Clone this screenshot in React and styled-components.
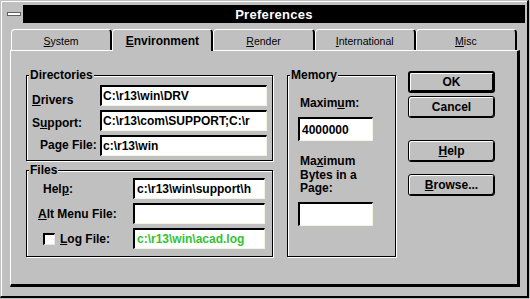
import React from 'react';
import styled, { createGlobalStyle } from 'styled-components';

const GlobalStyle = createGlobalStyle`
  html, body {
    margin: 0;
    background: #c0c0c0;
  }
  body {
    font-family: "Liberation Sans", Arial, sans-serif;
    font-size: 12px;
    font-weight: bold;
    color: #000;
  }
`;

// Dialog frame
const Window = styled.div`
  box-sizing: border-box;
  width: 529px;
  height: 298px;
  background: #c0c0c0;
  border-top: 1px solid #c0c0c0;
  border-left: 1px solid #c0c0c0;
  border-right: 2px solid #000;
  border-bottom: 2px solid #000;
  box-shadow: inset 1px 1px 0 #fff;
  padding: 4px 2px 0 4px;
`;

const TitleRow = styled.div`
  display: flex;
  height: 18px;
`;

const SysMenu = styled.div`
  width: 18px;
  display: flex;
  align-items: center;
  justify-content: center;
  background: #c0c0c0;
`;

const SysDash = styled.div`
  width: 12px;
  height: 2px;
  background: #fff;
  border: 1px solid #606060;
`;

const TitleBar = styled.div`
  flex: 1;
  background: #000;
  color: #fff;
  font-size: 13px;
  letter-spacing: 0.3px;
  display: flex;
  align-items: center;
  justify-content: center;
`;

// Tabs
const Tabs = styled.div`
  margin: 6px 5px 0 5px;
`;

const TabStrip = styled.div`
  display: flex;
  height: 21px;
  padding: 0 3px 0 1px;
`;

const Tab = styled.div`
  flex: 1;
  box-sizing: border-box;
  height: ${({ $active }) => ($active ? 22 : 21)}px;
  margin-bottom: ${({ $active }) => ($active ? -1 : 0)}px;
  border-top: 1px solid #fff;
  border-left: 1px solid #fff;
  border-right: 2px solid #000;
  border-radius: 4px 4px 0 0;
  background: #c0c0c0;
  display: flex;
  align-items: flex-start;
  justify-content: center;
  padding-top: ${({ $active }) => ($active ? 4 : 5)}px;
  font-size: ${({ $active }) => ($active ? 12 : 10.5)}px;
  font-weight: ${({ $active }) => ($active ? 'bold' : 'normal')};
  position: relative;
  z-index: ${({ $active }) => ($active ? 2 : 1)};
`;

const Panel = styled.div`
  box-sizing: border-box;
  height: 237px;
  border-top: 1px solid #fff;
  border-left: 1px solid #fff;
  border-right: 3px solid #000;
  border-bottom: 3px solid #000;
  padding: 17px 0 0 15px;
`;

const Columns = styled.div`
  display: flex;
  align-items: flex-start;
`;

const LeftCol = styled.div`
  width: 247px;
  display: flex;
  flex-direction: column;
`;

// Group boxes
const Group = styled.div`
  box-sizing: border-box;
  width: ${({ $w }) => $w}px;
  height: ${({ $h }) => $h}px;
  margin-top: ${({ $mt }) => $mt}px;
  margin-left: ${({ $ml = 0 }) => $ml}px;
  border: 1px solid #000;
  box-shadow: 1px 1px 0 #fff, inset 1px 1px 0 #fff;
`;

const Legend = styled.div`
  width: fit-content;
  height: 14px;
  line-height: 14px;
  margin: -8px 0 0 2px;
  padding: 0 1px;
  background: #c0c0c0;
`;

const Fields = styled.div`
  display: grid;
  grid-template-columns: ${({ $cols }) => $cols};
  grid-auto-rows: 21px;
  row-gap: 4px;
  margin-top: ${({ $mt }) => $mt}px;
  padding-left: ${({ $pl = 0 }) => $pl}px;
`;

const Label = styled.label`
  align-self: center;
  display: flex;
  align-items: center;
  gap: 5px;
  white-space: nowrap;
  padding: ${({ $dy = 0 }) => ($dy > 0 ? $dy * 2 : 0)}px 0
    ${({ $dy = 0 }) => ($dy < 0 ? -$dy * 2 : 0)}px ${({ $indent = 0 }) => $indent}px;
`;

const Field = styled.input`
  box-sizing: border-box;
  width: ${({ $w }) => ($w ? `${$w}px` : '100%')};
  height: ${({ $h = 21 }) => $h}px;
  margin: 0;
  margin-top: ${({ $mt = 0 }) => $mt}px;
  padding: 0 0 0 ${({ $pad = 1 }) => $pad}px;
  border-top: 2px solid #000;
  border-left: 2px solid #000;
  border-right: 1px solid #f4f4e4;
  border-bottom: 1px solid #f4f4e4;
  background: #fff;
  color: ${({ $color = '#000' }) => $color};
  font: inherit;
  outline: none;
`;

const Check = styled.span`
  box-sizing: border-box;
  width: 12px;
  height: 12px;
  background: #fff;
  border-top: 2px solid #000;
  border-left: 2px solid #000;
  border-right: 1px solid #e8e8e8;
  border-bottom: 1px solid #e8e8e8;
`;

// Memory box
const MemBody = styled.div`
  padding-left: 10px;
`;

const MemLabel = styled.div`
  margin-top: ${({ $mt }) => $mt}px;
  padding-left: 2px;
  line-height: ${({ $lh = 14 }) => $lh}px;
`;

// Buttons
const ButtonCol = styled.div`
  width: 87px;
  margin: 3px 0 0 12px;
  display: flex;
  flex-direction: column;
`;

const Button = styled.button`
  box-sizing: border-box;
  height: 22px;
  margin-top: ${({ $mt = 0 }) => $mt}px;
  border: ${({ $default }) => ($default ? 2 : 1)}px solid #000;
  border-radius: 3px;
  background: #c0c0c0;
  box-shadow: inset 1px 1px 0 #fff, inset -1px -1px 0 #000;
  font: inherit;
  color: #000;
  padding: 0;
  display: flex;
  align-items: center;
  justify-content: center;
`;

const tabs = [
  { key: 'S', rest: 'ystem' },
  { key: 'E', rest: 'nvironment', active: true },
  { key: 'R', rest: 'ender' },
  { key: 'I', rest: 'nternational' },
  { key: 'M', rest: 'isc' },
];

export default function App() {
  return (
    <>
      <GlobalStyle />
      <Window>
        <TitleRow>
          <SysMenu>
            <SysDash />
          </SysMenu>
          <TitleBar>Preferences</TitleBar>
        </TitleRow>

        <Tabs>
          <TabStrip>
            {tabs.map((t) => (
              <Tab key={t.key} $active={t.active}>
                <span>
                  <u>{t.key}</u>
                  {t.rest}
                </span>
              </Tab>
            ))}
          </TabStrip>

          <Panel>
            <Columns>
              <LeftCol>
                <Group $w={247} $h={86} $mt={7}>
                  <Legend>Directories</Legend>
                  <Fields $cols="68px 167px" $mt={3} $pl={5}>
                    <Label $dy={4}>
                      <span><u>D</u>rivers</span>
                    </Label>
                    <Field readOnly value={'C:\\r13\\win\\DRV'} />
                    <Label $dy={2}>
                      <span>S<u>u</u>pport:</span>
                    </Label>
                    <Field readOnly value={'C:\\r13\\com\\SUPPORT;C:\\r'} />
                    <Label $dy={-1} $indent={8}>
                      <span>Pa<u>g</u>e File:</span>
                    </Label>
                    <Field readOnly value={'c:\\r13\\win'} />
                  </Fields>
                </Group>

                <Group $w={247} $h={87} $mt={9}>
                  <Legend>Files</Legend>
                  <Fields $cols="106px 132px" $mt={1}>
                    <Label $indent={16}>
                      <span>Hel<u>p</u>:</span>
                    </Label>
                    <Field readOnly $pad={2} value={'c:\\r13\\win\\support\\h'} />
                    <Label $indent={11}>
                      <span><u>A</u>lt Menu File:</span>
                    </Label>
                    <Field readOnly value="" />
                    <Label $indent={16}>
                      <Check />
                      <span><u>L</u>og File:</span>
                    </Label>
                    <Field readOnly $pad={2} $color="#33c233" value={'c:\\r13\\win\\acad.log'} />
                  </Fields>
                </Group>
              </LeftCol>

              <Group $w={109} $h={182} $mt={7} $ml={14}>
                <Legend>Memory</Legend>
                <MemBody>
                  <MemLabel $mt={14}>
                    Maxim<u>u</u>m:
                  </MemLabel>
                  <Field readOnly $w={75} $h={24} $mt={7} $pad={2} value="4000000" />
                  <MemLabel $mt={14} $lh={13.5}>
                    Ma<u>x</u>imum
                    <br />
                    Bytes in a
                    <br />
                    Page:
                  </MemLabel>
                  <Field readOnly $w={75} $h={24} $mt={6} value="" />
                </MemBody>
              </Group>

              <ButtonCol>
                <Button $default>OK</Button>
                <Button $mt={3}>Cancel</Button>
                <Button $mt={22}>
                  <span><u>H</u>elp</span>
                </Button>
                <Button $mt={12}>
                  <span><u>B</u>rowse...</span>
                </Button>
              </ButtonCol>
            </Columns>
          </Panel>
        </Tabs>
      </Window>
    </>
  );
}
